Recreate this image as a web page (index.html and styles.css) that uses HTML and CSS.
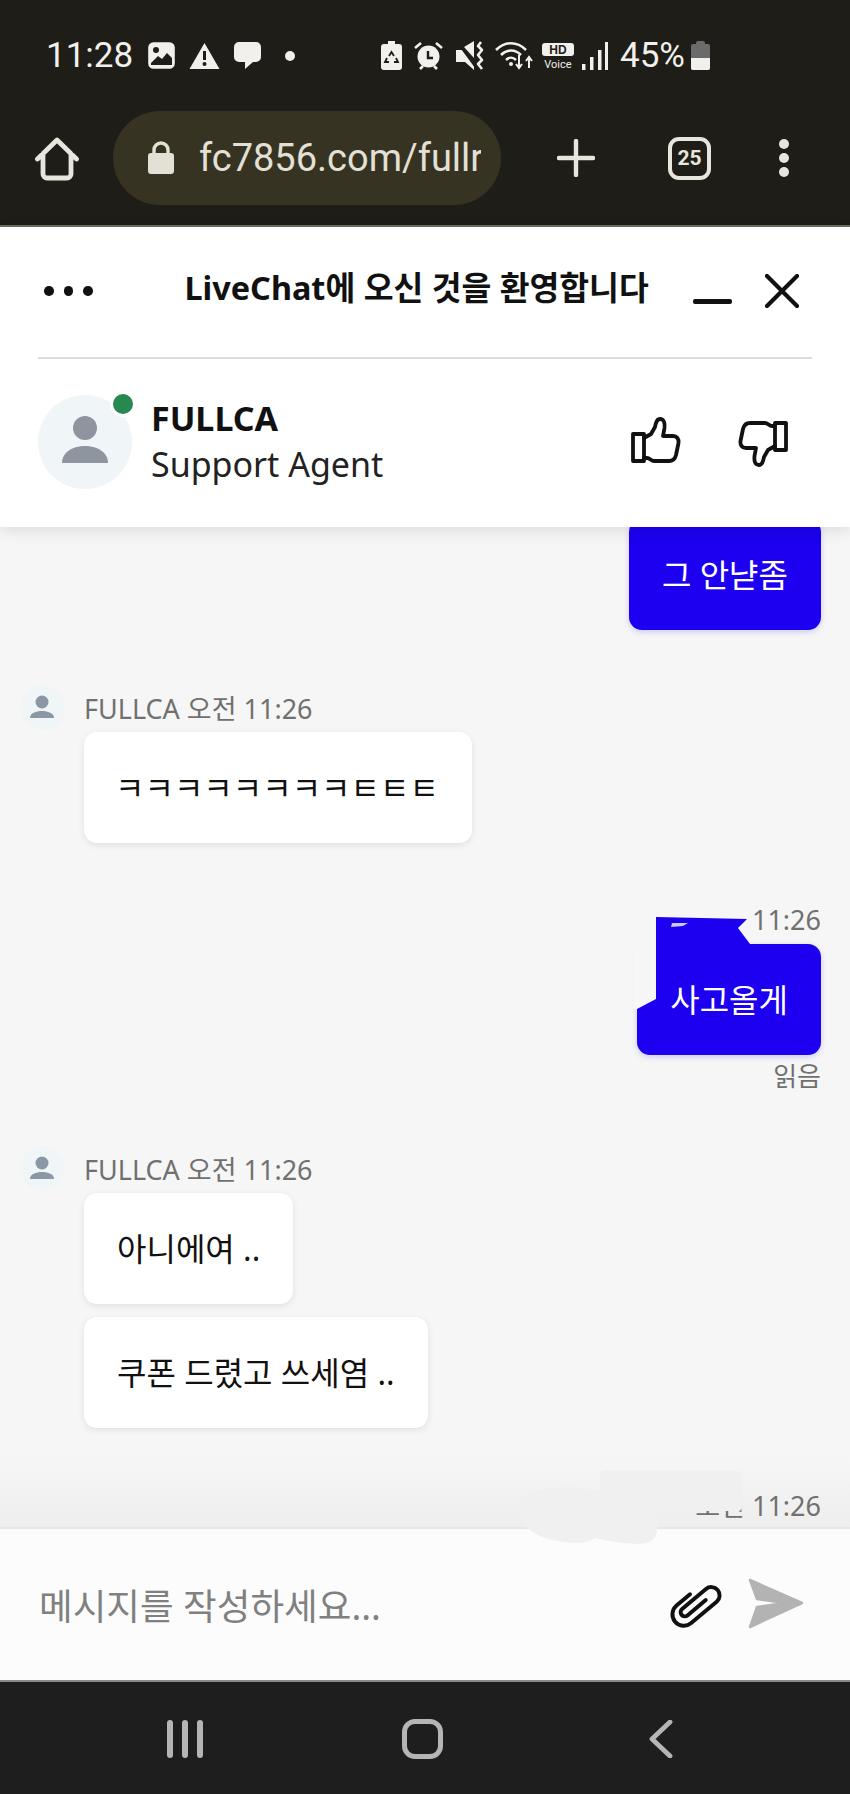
FILE: index.html
```html
<!DOCTYPE html>
<html lang="ko">
<head>
<meta charset="utf-8">
<title>LiveChat</title>
<link rel="stylesheet" href="styles.css">
</head>
<body>
<div class="phone">
  <div class="chrome">
    <div class="status">
      <span class="clock">11:28</span>
      <svg class="ic ic-pic" width="27" height="27" viewBox="0 0 27 27"><rect x="1.5" y="1.5" width="24" height="24" rx="4" fill="none" stroke="#f1f0ec" stroke-width="2.6"/><rect x="2" y="2" width="23" height="23" rx="4" fill="#f1f0ec"/><path d="M3 21l7-7 4 3 5-6 5 5v7H3z" fill="#1e1d17"/><circle cx="8" cy="8" r="3" fill="#1e1d17"/></svg>
      <svg class="ic ic-warn" width="31" height="27" viewBox="0 0 31 27"><path d="M15.500 1L30.500 27H.5z" fill="#f1f0ec"/><rect x="14" y="9" width="3" height="9" fill="#1e1d17"/><circle cx="15.500" cy="22" r="2" fill="#1e1d17"/></svg>
      <svg class="ic ic-chat" width="27" height="27" viewBox="0 0 27 27"><path d="M5 0h17a5 5 0 0 1 5 5v10a5 5 0 0 1-5 5h-3l-8 7v-7H5a5 5 0 0 1-5-5V5a5 5 0 0 1 5-5z" fill="#f1f0ec"/></svg>
      <svg class="ic ic-dot" width="10" height="10" viewBox="0 0 10 10"><circle cx="5" cy="5" r="5" fill="#f1f0ec"/></svg>
      <div class="status-right">
        <svg class="ic" width="21" height="29" viewBox="0 0 21 29"><path d="M7 0h7v3h4a3 3 0 0 1 3 3v20a3 3 0 0 1-3 3H3a3 3 0 0 1-3-3V6a3 3 0 0 1 3-3h4z" fill="#f1f0ec"/><path d="M8 15l2.500-4 2.500 4M15 17l2 4h-4M8 21H4l2-4" fill="none" stroke="#1e1d17" stroke-width="1.800"/></svg>
        <svg class="ic ic-alarm" width="29" height="29" viewBox="0 0 29 29"><circle cx="14.500" cy="15.500" r="11" fill="#f1f0ec"/><path d="M1 7l6-5M28 7l-6-5M6 28l3-3M23 28l-3-3" stroke="#f1f0ec" stroke-width="2.600" fill="none"/><path d="M14 10v7h5" fill="none" stroke="#1e1d17" stroke-width="2.400"/></svg>
        <svg class="ic ic-mute" width="29" height="29" viewBox="0 0 29 29"><path d="M0 9h6l12 15v5L9 21H0zM8 6l10-6v17z" fill="#f1f0ec"/><path d="M1 1l19 26" stroke="#1e1d17" stroke-width="1.500"/><path d="M25 1l-3 4 4 4-4 5 4 5-4 4 4 5" fill="none" stroke="#f1f0ec" stroke-width="2.600" stroke-linejoin="round"/></svg>
        <svg class="ic ic-wifi" width="38" height="29" viewBox="0 0 38 29"><g fill="none" stroke="#f1f0ec" stroke-width="2.500"><path d="M1 9c9-9 21-9 30 0"/><path d="M6 14c6-6 14-6 20 0"/><path d="M11 19c3-3 7-3 10 0"/></g><circle cx="16" cy="23" r="2" fill="#f1f0ec"/><path d="M24 14v13m-3-4l3 4 3-4M34 27V16m-3 4l3-4 3 4" fill="none" stroke="#f1f0ec" stroke-width="2"/></svg>
        <svg class="ic ic-voice" width="33" height="26" viewBox="0 0 33 26"><rect width="32" height="13" rx="3" fill="#f1f0ec"/><text class="hd" x="16" y="11.200" text-anchor="middle">HD</text><text class="vo" x="16" y="24.500" text-anchor="middle">Voice</text></svg>
        <svg class="ic ic-signal" width="26" height="28" viewBox="0 0 26 28"><g fill="#f1f0ec"><rect x="0" y="22" width="3.500" height="6"/><rect x="8" y="15" width="3.500" height="13"/><rect x="16" y="8" width="3.500" height="20"/><rect x="23" y="0" width="3" height="28"/></g></svg>
        <span class="batt-pct">45%</span>
        <div class="battery"><div class="batt-cap"></div><div class="batt-body"><div class="batt-level"></div></div></div>
      </div>
    </div>
    <div class="toolbar">
      <svg class="home" width="44" height="44" viewBox="0 0 44 44"><path d="M2.500 22L22 3l19.500 19M8 17v20a4 4 0 0 0 4 4h20a4 4 0 0 0 4-4V17" fill="none" stroke="#e8e5dc" stroke-width="4.800" stroke-linecap="round" stroke-linejoin="round"/></svg>
      <div class="pill">
        <svg class="lock" width="26" height="33" viewBox="0 0 26 33"><path d="M6 14V9a7 7 0 0 1 14 0v5" fill="none" stroke="#e3e0d6" stroke-width="3.400"/><rect y="12" width="26" height="21" rx="3" fill="#e3e0d6"/></svg>
        <span class="url">fc7856.com/fullr</span>
      </div>
      <svg class="plus" width="38" height="38" viewBox="0 0 38 38"><path d="M19 2v34M2 19h34" stroke="#e8e5dc" stroke-width="4.400" stroke-linecap="round"/></svg>
      <div class="tabs">25</div>
      <div class="menu"><i></i><i></i><i></i></div>
    </div>
  </div>
  <div class="chrome-edge"></div>

  <header class="chat-head">
    <div class="title-row">
      <div class="more"><i></i><i></i><i></i></div>
      <h1 class="title">LiveChat에 오신 것을 환영합니다</h1>
      <div class="minimize"></div>
      <svg class="close" width="34" height="34" viewBox="0 0 34 34"><path d="M2 2l30 30M32 2L2 32" stroke="#111" stroke-width="4.200" stroke-linecap="round"/></svg>
    </div>
    <div class="rule"></div>
    <div class="agent-row">
      <div class="avatar">
        <svg width="48" height="48" viewBox="0 0 48 48"><circle cx="24" cy="12" r="12" fill="#8f959e"/><path d="M1 47c0-11 11-17 23-17s23 6 23 17z" fill="#8f959e"/></svg>
        <span class="online"></span>
      </div>
      <div class="agent-info">
        <div class="agent-name">FULLCA</div>
        <div class="agent-role">Support Agent</div>
      </div>
      <svg class="thumb thumb-up" width="50" height="47" viewBox="0 0 50 47"><g fill="none" stroke="#111" stroke-width="3.800" stroke-linejoin="round" stroke-linecap="round"><rect x="2" y="17" width="11" height="27"/><path d="M13 21l7-4 4-7c1-5 2-8 5-8 4 0 5 4 4.500 9L32 19h10c4 0 6 3 5.500 7L45 38c-1 4-3 6-7 6H23c-3 0-4-3-7-3h-3"/></g></svg>
      <svg class="thumb thumb-down" width="50" height="47" viewBox="0 0 50 47"><g transform="rotate(180 25 23.500)" fill="none" stroke="#111" stroke-width="3.800" stroke-linejoin="round" stroke-linecap="round"><rect x="2" y="17" width="11" height="27"/><path d="M13 21l7-4 4-7c1-5 2-8 5-8 4 0 5 4 4.500 9L32 19h10c4 0 6 3 5.500 7L45 38c-1 4-3 6-7 6H23c-3 0-4-3-7-3h-3"/></g></svg>
    </div>
  </header>

  <main class="messages">
    <div class="out first">
      <div class="bubble bubble-out">그 안냗좀</div>
    </div>

    <div class="in">
      <div class="meta-in">
        <svg class="mini-avatar" width="45" height="45" viewBox="0 0 45 45"><circle cx="22.500" cy="22.500" r="22.500" fill="#f0f5f8"/><circle cx="22" cy="17" r="6.500" fill="#8a97a5"/><path d="M10 33c0-5 6-7 12-7s12 2 12 7z" fill="#8a97a5"/></svg>
        <span>FULLCA 오전 11:26</span>
      </div>
      <div class="bubble bubble-in jamo">ㅋㅋㅋㅋㅋㅋㅋㅋㅌㅌㅌ</div>
    </div>

    <div class="out gap-out">
      <div class="meta-out">11:26</div>
      <div class="bubble bubble-out">사고올게</div>
      <div class="read">읽음</div>
    </div>

    <div class="in gap-in">
      <div class="meta-in">
        <svg class="mini-avatar" width="45" height="45" viewBox="0 0 45 45"><circle cx="22.500" cy="22.500" r="22.500" fill="#f0f5f8"/><circle cx="22" cy="17" r="6.500" fill="#8a97a5"/><path d="M10 33c0-5 6-7 12-7s12 2 12 7z" fill="#8a97a5"/></svg>
        <span>FULLCA 오전 11:26</span>
      </div>
      <div class="bubble bubble-in">아니에여 ..</div>
      <div class="bubble bubble-in">쿠폰 드렸고 쓰세염 ..</div>
    </div>

    <div class="out gap-last">
      <div class="meta-out">오전 11:26</div>
    </div>
  </main>

  <footer class="composer">
    <span class="placeholder">메시지를 작성하세요...</span>
    <svg class="clip" width="54" height="48" viewBox="-26 -23 52 46"><path transform="rotate(-40)" d="M3-11H-14A11 11 0 0 0-14 11H18A8 8 0 0 0 18-5H-12A4 4 0 0 0-12 3H11" fill="none" stroke="#111" stroke-width="3.800" stroke-linecap="round"/></svg>
    <svg class="send" width="56" height="51" viewBox="0 0 56 51"><path d="M2 2l52 23-52 24 7-20 28-4-28-4z" fill="#b3b3b3" stroke="#b3b3b3" stroke-width="2.500" stroke-linejoin="round"/></svg>
  </footer>

  <nav class="navbar">
    <div class="nav-recent"><i></i><i></i><i></i></div>
    <div class="nav-home"></div>
    <svg class="nav-back" width="24" height="38" viewBox="0 0 24 38"><path d="M21 2L3 19l18 17" fill="none" stroke="#b5b5b5" stroke-width="4.800" stroke-linecap="round" stroke-linejoin="round"/></svg>
  </nav>

  <!-- painted-over patches on the saved capture -->
  <svg class="patch patch-blue" width="125" height="100" viewBox="0 0 125 100"><path d="M0 25H23V84L4 94H0z" fill="#f6f6f6"/><path d="M23 2L114 4 109 9 105 13 117 29 V32H23z" fill="#1c00ef"/><path d="M39 8H55L50 11 38 12z" fill="#c8c8ea"/></svg>
  <svg class="patch patch-grey" width="226" height="80" viewBox="0 0 226 80"><path d="M82 5q1-4 8-4h125q9 0 9 8v29q0 4-4 4h-81v20q-1 12-18 13-26-1-44-6-8 7-30 4C6 68 0 50 3 34 7 20 42 14 82 22z" fill="#f0f0f0"/></svg>
</div>
</body>
</html>
```
FILE: styles.css
```css
* { box-sizing: border-box; }

html, body { margin: 0; padding: 0; }

body {
  background: #f6f6f6;
  font-family: "Noto Sans", "Noto Sans CJK KR", sans-serif;
  color: #111;
}

.phone {
  position: relative;
  width: 850px;
  height: 1794px;
  display: flex;
  flex-direction: column;
  overflow: hidden;
}

/* browser and system chrome */
.chrome {
  flex: 0 0 225px;
  background: #1e1d17;
  font-family: Roboto, "Liberation Sans", sans-serif;
}

.chrome-edge {
  flex: 0 0 2px;
  background: #6e6d5e;
}

.status {
  height: 111px;
  padding: 0 0 0 46px;
  display: flex;
  align-items: center;
  color: #f1f0ec;
}

.clock {
  font-size: 35px;
  line-height: 34px;
  width: 87px;
  margin-right: 15px;
}

.ic { display: block; flex: none; }
.ic-warn { margin-left: 14px; }
.ic-chat { margin-left: 14px; }
.ic-dot { margin-left: 24px; }

.status-right {
  display: flex;
  align-items: center;
  margin-left: 86px;
}

.ic-alarm { margin-left: 12px; }
.ic-mute { margin-left: 13px; }
.ic-wifi { margin-left: 10px; }
.ic-voice { margin-left: 9px; }
.ic-signal { margin-left: 7px; }

.hd {
  font-family: "Liberation Sans", sans-serif;
  font-size: 12px;
  font-weight: 700;
  fill: #1e1d17;
}

.vo {
  font-family: Roboto, sans-serif;
  font-size: 11px;
  fill: #f1f0ec;
}

.batt-pct {
  font-size: 35px;
  line-height: 34px;
  margin-left: 12px;
}

.battery { margin-left: 6px; width: 19px; }

.batt-cap {
  width: 9px;
  height: 3px;
  margin: 0 auto;
  background: #6b6b6b;
  border-radius: 2px 2px 0 0;
}

.batt-body {
  height: 26px;
  background: #6b6b6b;
  border-radius: 2px;
  display: flex;
  align-items: flex-end;
  overflow: hidden;
}

.batt-level { width: 100%; height: 12px; background: #f1f0ec; }

.toolbar {
  height: 114px;
  display: flex;
  align-items: flex-start;
  padding-left: 35px;
}

.home { margin-top: 26px; flex: none; }

.pill {
  width: 388px;
  height: 94px;
  margin-left: 34px;
  border-radius: 47px;
  background: #363323;
  display: flex;
  align-items: center;
  padding-left: 35px;
  overflow: hidden;
}

.lock { flex: none; margin-top: -2px; }

.url {
  margin-left: 25px;
  width: 282px;
  flex: none;
  overflow: hidden;
  white-space: nowrap;
  font-size: 38px;
  line-height: 46px;
  color: #e3e0d6;
}

.plus { margin: 28px 0 0 56px; flex: none; }

.tabs {
  width: 43px;
  height: 43px;
  margin: 26px 0 0 73px;
  flex: none;
  border: 4.500px solid #e8e5dc;
  border-radius: 11px;
  color: #e8e5dc;
  font-size: 21px;
  font-weight: 700;
  line-height: 34px;
  text-align: center;
}

.menu {
  margin: 28px 0 0 68px;
  display: flex;
  flex-direction: column;
  gap: 4px;
}

.menu i {
  display: block;
  width: 10px;
  height: 10px;
  border-radius: 50%;
  background: #e8e5dc;
}

/* chat header */
.chat-head {
  position: relative;
  z-index: 2;
  flex: 0 0 300px;
  background: #fff;
  box-shadow: 0 4px 14px rgba(0, 0, 0, .1);
}

.title-row {
  height: 130px;
  display: flex;
  align-items: center;
  padding-left: 44px;
}

.more { display: flex; gap: 10px; flex: none; margin-top: -2px; }

.more i {
  display: block;
  width: 9.500px;
  height: 9.500px;
  border-radius: 50%;
  background: #111;
}

.title {
  margin: -11px 0 0 92px;
  width: 463px;
  flex: none;
  font-size: 32.400px;
  line-height: 40px;
  font-weight: 700;
  white-space: nowrap;
}

.minimize {
  width: 39px;
  height: 5px;
  margin: 18px 0 0 45px;
  background: #111;
  border-radius: 2px;
  flex: none;
}

.close { margin: -2px 0 0 33px; flex: none; }

.rule { height: 2px; margin: 0 38px; background: #ddd; }

.agent-row {
  height: 168px;
  padding: 0 0 0 38px;
  display: flex;
  align-items: center;
}

.avatar {
  position: relative;
  width: 94px;
  height: 94px;
  margin-top: -2px;
  border-radius: 50%;
  background: #f0f5f8;
  display: flex;
  align-items: flex-start;
  justify-content: center;
  padding-top: 21px;
  flex: none;
}

.online {
  position: absolute;
  top: -4px;
  right: -4px;
  width: 26px;
  height: 26px;
  border: 3px solid #fff;
  border-radius: 50%;
  background: #26894f;
  box-sizing: border-box;
}

.agent-info { margin: -3px 0 0 19px; width: 480px; flex: none; }

.agent-name {
  margin: -1px 0 1px;
  font-size: 34px;
  line-height: 45px;
  font-weight: 700;
}

.agent-role {
  font-size: 34px;
  line-height: 45px;
  color: #222;
}

.thumb { flex: none; }
.thumb-up { margin: -6px 0 0 0; }
.thumb-down { margin: 0 0 0 57px; }

/* transcript */
.messages {
  flex: 1 1 auto;
  min-height: 0;
  overflow: hidden;
  padding: 0 29px 0 20px;
  background: linear-gradient(to bottom, #f6f6f6 calc(100% - 72px), #eeeeee 100%);
}

.bubble {
  border-radius: 13px;
  padding: 32px 33px;
  font-size: 32px;
  line-height: 47px;
  white-space: nowrap;
  width: fit-content;
}

.bubble-out {
  background: #1c00ef;
  color: #fff;
  box-shadow: 0 2px 6px rgba(28, 0, 239, .18);
}

.bubble-in {
  background: #fff;
  color: #111;
  margin-left: 64px;
  box-shadow: 0 2px 7px rgba(0, 0, 0, .09);
}

.bubble-in + .bubble-in { margin-top: 13px; }

.jamo { padding-left: 31px; padding-right: 33px; }

.out { display: flex; flex-direction: column; align-items: flex-end; }
.first { margin-top: -8px; }

.in { margin-top: 53px; }
.gap-in { margin-top: 49px; }
.gap-out { margin-top: 57px; }
.gap-last { margin-top: 56px; }

.meta-in {
  height: 49px;
  display: flex;
  align-items: center;
  gap: 19px;
  font-size: 27px;
  color: #707070;
}

.mini-avatar { flex: none; margin-top: -1px; }

.meta-out {
  height: 44px;
  font-size: 27px;
  line-height: 44px;
  color: #707070;
}

.gap-out .meta-out { line-height: 40px; }

.read {
  height: 40px;
  font-size: 26px;
  line-height: 42px;
  color: #707070;
}

/* message box */
.composer {
  flex: 0 0 153px;
  background: #fcfcfc;
  border-top: 2px solid #e6e6e6;
  display: flex;
  align-items: center;
  padding-left: 39px;
  position: relative;
  z-index: 1;
}

.placeholder {
  width: 629px;
  flex: none;
  font-size: 36.600px;
  color: #808080;
  white-space: nowrap;
}

.clip { flex: none; }
.send { margin-left: 26px; flex: none; margin-top: -2px; }

/* system navigation */
.navbar {
  flex: 0 0 114px;
  background: #1e1e1e;
  border-top: 2px solid #8a8a8a;
  display: flex;
  align-items: center;
  position: relative;
  padding: 1px 0 0 167px;
}

.nav-recent { display: flex; gap: 9px; flex: none; }

.nav-recent i {
  display: block;
  width: 6px;
  height: 38px;
  border-radius: 3px;
  background: #b5b5b5;
}

.nav-home {
  width: 41px;
  height: 40px;
  margin-left: 199px;
  border: 5px solid #b5b5b5;
  border-radius: 13px;
  flex: none;
}

.nav-back { margin-left: 206px; flex: none; }

/* painted-over patches on the saved capture */
.patch { position: absolute; z-index: 3; display: block; }
.patch-blue { left: 633px; top: 915px; }
.patch-grey { left: 518px; top: 1469px; }
```
